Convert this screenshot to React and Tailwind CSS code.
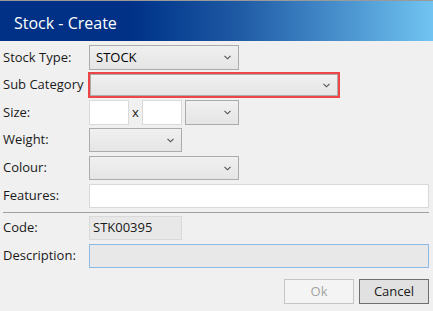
import React from "react";

const font = { fontFamily: '"Open Sans", "Noto Sans", sans-serif' };

function Chevron() {
  return (
    <svg width="7" height="5" viewBox="0 0 7 5" className="shrink-0">
      <polyline points="0.5,0.8 3.5,3.8 6.5,0.8" fill="none" stroke="#505050" strokeWidth="1.1" />
    </svg>
  );
}

function Select({ className = "", children }) {
  return (
    <div
      className={`flex items-center justify-between border border-[#acacac] bg-gradient-to-b from-[#f0f0f0] to-[#e5e5e5] pl-[6px] pr-[7px] text-[13px] text-black ${className}`}
    >
      <span>{children}</span>
      <Chevron />
    </div>
  );
}

function Label({ children }) {
  return <div className="w-[86px] shrink-0 pl-[3px] text-[13px] text-[#1a1a1a]">{children}</div>;
}

export default function App() {
  return (
    <div className="w-[433px] h-[311px] bg-[#f0f0f0] flex flex-col overflow-hidden" style={font}>
      <div className="h-[1px] bg-[#9a9a9a]" />
      <div className="h-[40px] flex items-center pl-[14px] pt-[3px] bg-gradient-to-r from-[#003187] via-[#1f5aa5] to-[#71c4f1] from-[30%] via-[55%]">
        <span className="text-white text-[16px]">Stock - Create</span>
      </div>

      <div className="flex items-center mt-[4px] h-[25px]">
        <Label>Stock Type:</Label>
        <Select className="ml-[3px] w-[150px] h-[25px]">STOCK</Select>
      </div>

      <div className="flex items-center mt-[2px] h-[26px]">
        <Label>Sub Category</Label>
        <div className="ml-[2px] w-[252px] h-[26px] border-2 border-[#f04545]">
          <Select className="w-full h-full">{""}</Select>
        </div>
      </div>

      <div className="flex items-center mt-[2px] h-[25px]">
        <Label>Size:</Label>
        <div className="ml-[3px] w-[40px] h-[25px] bg-white border border-[#d9d9d9]" />
        <span className="w-[13px] text-center text-[13px] text-[#1a1a1a]">x</span>
        <div className="w-[40px] h-[25px] bg-white border border-[#d9d9d9]" />
        <Select className="ml-[3px] w-[54px] h-[25px]">{""}</Select>
      </div>

      <div className="flex items-center mt-[3px] h-[24px]">
        <Label>Weight:</Label>
        <Select className="ml-[3px] w-[93px] h-[24px]">{""}</Select>
      </div>

      <div className="flex items-center mt-[4px] h-[24px]">
        <Label>Colour:</Label>
        <Select className="ml-[3px] w-[150px] h-[24px]">{""}</Select>
      </div>

      <div className="flex items-center mt-[4px] h-[24px]">
        <Label>Features:</Label>
        <div className="ml-[3px] w-[340px] h-[24px] bg-white border border-[#d9d9d9]" />
      </div>

      <div className="mt-[4px] ml-[3px] w-[426px] h-[1px] bg-[#a0a0a0]" />

      <div className="flex items-center mt-[3px] h-[24px]">
        <Label>Code:</Label>
        <div className="ml-[3px] w-[93px] h-[24px] bg-[#e8e8e8] border border-[#d9d9d9] flex items-center pl-[3px] text-[13px] text-[#1a1a1a]">
          STK00395
        </div>
      </div>

      <div className="flex items-center mt-[4px] h-[24px]">
        <Label>Description:</Label>
        <div className="ml-[3px] w-[340px] h-[24px] bg-[#e8e8e8] border border-[#8cb8e6]" />
      </div>

      <div className="flex justify-end gap-[5px] mt-[11px] pr-[4px]">
        <div className="w-[70px] h-[25px] border border-[#c6c6c6] bg-[#f4f4f4] flex items-center justify-center text-[13px] text-[#a3a3a3]">
          Ok
        </div>
        <div className="w-[70px] h-[25px] border border-[#6f6f6f] bg-[#e1e1e1] flex items-center justify-center text-[13px] text-[#1a1a1a]">
          Cancel
        </div>
      </div>
    </div>
  );
}
